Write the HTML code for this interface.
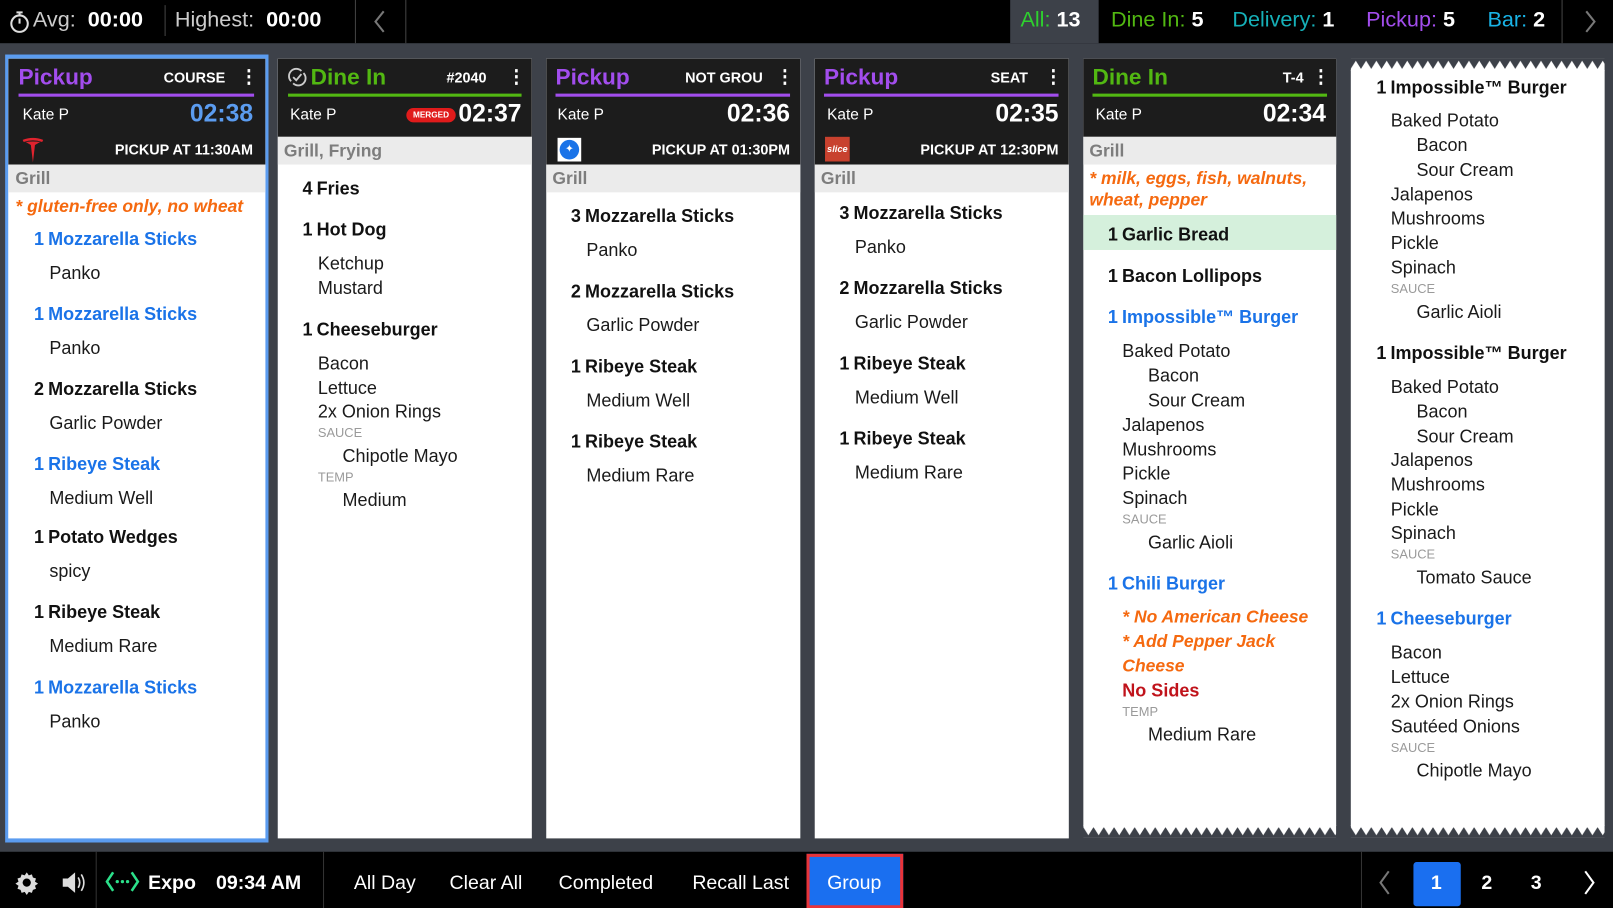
<!DOCTYPE html>
<html><head><meta charset="utf-8"><style>
*{margin:0;padding:0;box-sizing:border-box}
body{width:1613px;height:908px;overflow:hidden;background:#000;font-family:"Liberation Sans",sans-serif}
#w{position:absolute;left:0;top:0;width:1568px;height:883px;transform:scale(1.0287);transform-origin:0 0;background:#3d4149}
.a{position:absolute}
.l{position:absolute;white-space:nowrap;line-height:22px;transform:translateY(-50%)}
.top{left:0;top:0;width:1568px;height:42px;background:#000}
.bot{left:0;top:828px;width:1568px;height:55px;background:#000}
.card{position:absolute;top:57px;height:758px;background:#fff;overflow:hidden}
.hd{position:absolute;left:0;top:0;width:100%;background:#1c1c1c}
.ttl{font-size:22px;font-weight:bold}
.lab{font-size:14px;font-weight:bold;color:#fff}
.kb{font-size:18px;font-weight:bold;color:#fff}
.nm{font-size:15px;color:#fff}
.tm{font-size:24px;font-weight:bold;color:#fff}
.pk{font-size:14px;font-weight:bold;color:#fff}
.band{position:absolute;left:0;width:100%;height:27px;background:#ebebeb}
.g{font-size:17px;font-weight:bold;color:#7d7d7d}
.al{font-size:17px;font-weight:bold;font-style:italic;color:#f5690f}
.i{font-size:17.5px;font-weight:bold;color:#111}
.i span{margin-left:4px}
.b{color:#1a73e8}
.m{font-size:17.5px;color:#1a1a1a}
.s{font-size:12.5px;color:#9a9a9a}
.r{color:#c0131b;font-weight:bold}
.tb{font-size:21px;color:#fff}
.bb{font-size:19px;color:#fff}
.dv{position:absolute;width:1px;background:#333}
</style></head><body><div id="w">

<div class="a top">
 <svg class="a" style="left:8px;top:9px" width="22" height="24" viewBox="0 0 22 24"><circle cx="11" cy="14" r="8" fill="none" stroke="#ddd" stroke-width="2"/><path d="M8 3h6M11 3v3M11 14V9" stroke="#ddd" stroke-width="2" fill="none"/></svg>
 <div class="l tb" style="left:32px;top:20px;color:#ccc">Avg: <b style="color:#fff">&nbsp;00:00</b></div>
 <div class="dv" style="left:160px;top:5px;height:30px;background:#444"></div>
 <div class="l tb" style="left:170px;top:20px;color:#ccc">Highest: <b style="color:#fff">&nbsp;00:00</b></div>
 <div class="dv" style="left:345px;top:0;height:42px;background:#444"></div>
 <div class="dv" style="left:394px;top:0;height:42px;background:#444"></div>
 <svg class="a" style="left:360px;top:8px" width="18" height="26"><path d="M13 3L5 13l8 10" stroke="#777" stroke-width="2" fill="none"/></svg>
 <div class="a" style="left:982px;top:0;width:86px;height:42px;background:#3d4149"></div>
 <div class="l tb" style="left:992px;top:20px;color:#2ed12e">All: <b style="color:#fff">13</b></div>
 <div class="l tb" style="left:1080px;top:20px;color:#52b812">Dine In: <b style="color:#fff">5</b></div>
 <div class="l tb" style="left:1198px;top:20px;color:#16b0b8">Delivery: <b style="color:#fff">1</b></div>
 <div class="l tb" style="left:1328px;top:20px;color:#a24ded">Pickup: <b style="color:#fff">5</b></div>
 <div class="l tb" style="left:1446px;top:20px;color:#19b3e6">Bar: <b style="color:#fff">2</b></div>
 <div class="dv" style="left:1518px;top:0;height:42px;background:#444"></div>
 <svg class="a" style="left:1537px;top:8px" width="18" height="26"><path d="M5 3l8 10-8 10" stroke="#777" stroke-width="2" fill="none"/></svg>
</div>

<!-- Card 1 -->
<div class="a" style="left:5px;top:53px;width:256px;height:766px;background:#5b9cf0"></div>
<div class="card" style="left:8px;width:250px">
 <div class="hd" style="height:103px"></div>
 <div class="l ttl" style="left:10px;top:18px;color:#a24ded">Pickup</div>
 <div class="l lab" style="left:151px;top:18px">COURSE</div>
 <div class="l kb" style="left:225px;top:17px">&#8942;</div>
 <div class="a" style="left:10px;top:34px;width:229px;height:3px;background:#a24ded"></div>
 <div class="l nm" style="left:14px;top:55px">Kate P</div>
 <div class="l tm" style="right:12px;top:54px;color:#5b9cf0">02:38</div>
 <svg class="a" style="left:12px;top:76px" width="24" height="26" viewBox="0 0 24 26"><path d="M2 3Q12 -1 22 3L21 5Q12 2 3 5Z M5 5Q12 4 19 5L14 8 12 25 10 8Z" fill="#e0232e"/></svg>
 <div class="l pk" style="right:12px;top:88px">PICKUP AT 11:30AM</div>
 <div class="band" style="top:103px"></div>
 <div class="l g" style="left:7px;top:117px">Grill</div>
 <div class="l al" style="left:7px;top:144px">* gluten-free only, no wheat</div>
 <div class="l i b" style="left:25px;top:175px">1<span>Mozzarella Sticks</span></div>
 <div class="l m" style="left:40px;top:208px">Panko</div>
 <div class="l i b" style="left:25px;top:248px">1<span>Mozzarella Sticks</span></div>
 <div class="l m" style="left:40px;top:281px">Panko</div>
 <div class="l i" style="left:25px;top:321px">2<span>Mozzarella Sticks</span></div>
 <div class="l m" style="left:40px;top:354px">Garlic Powder</div>
 <div class="l i b" style="left:25px;top:394px">1<span>Ribeye Steak</span></div>
 <div class="l m" style="left:40px;top:427px">Medium Well</div>
 <div class="l i" style="left:25px;top:465px">1<span>Potato Wedges</span></div>
 <div class="l m" style="left:40px;top:498px">spicy</div>
 <div class="l i" style="left:25px;top:538px">1<span>Ribeye Steak</span></div>
 <div class="l m" style="left:40px;top:571px">Medium Rare</div>
 <div class="l i b" style="left:25px;top:611px">1<span>Mozzarella Sticks</span></div>
 <div class="l m" style="left:40px;top:644px">Panko</div>
</div>

<!-- Card 2 -->
<div class="card" style="left:270px;width:247px">
 <div class="hd" style="height:76px"></div>
 <svg class="a" style="left:9px;top:8px" width="20" height="20" viewBox="0 0 20 20"><path d="M4 14A7 7 0 0 1 14 4M16 6A7 7 0 0 1 6 16" stroke="#ccc" stroke-width="1.8" fill="none"/><path d="M6 10l3 3 5-6" stroke="#ccc" stroke-width="1.8" fill="none"/></svg>
 <div class="l ttl" style="left:32px;top:18px;color:#52b812">Dine In</div>
 <div class="l lab" style="left:164px;top:18px">#2040</div>
 <div class="l kb" style="left:223px;top:17px">&#8942;</div>
 <div class="a" style="left:10px;top:34px;width:227px;height:3px;background:#52b812"></div>
 <div class="l nm" style="left:12px;top:55px">Kate P</div>
 <div class="a" style="left:125px;top:48px;width:48px;height:14px;border-radius:7px;background:#e01b1b;color:#fff;font-size:8px;font-weight:bold;text-align:center;line-height:14px">MERGED</div>
 <div class="l tm" style="right:10px;top:54px">02:37</div>
 <div class="band" style="top:76px"></div>
 <div class="l g" style="left:6px;top:90px">Grill, Frying</div>
 <div class="l i" style="left:24px;top:126px">4<span>Fries</span></div>
 <div class="l i" style="left:24px;top:166px">1<span>Hot Dog</span></div>
 <div class="l m" style="left:39px;top:199px">Ketchup</div>
 <div class="l m" style="left:39px;top:223px">Mustard</div>
 <div class="l i" style="left:24px;top:263px">1<span>Cheeseburger</span></div>
 <div class="l m" style="left:39px;top:296px">Bacon</div>
 <div class="l m" style="left:39px;top:320px">Lettuce</div>
 <div class="l m" style="left:39px;top:343px">2x Onion Rings</div>
 <div class="l s" style="left:39px;top:364px">SAUCE</div>
 <div class="l m" style="left:63px;top:386px">Chipotle Mayo</div>
 <div class="l s" style="left:39px;top:407px">TEMP</div>
 <div class="l m" style="left:63px;top:429px">Medium</div>
</div>

<!-- Card 3 -->
<div class="card" style="left:531px;width:247px">
 <div class="hd" style="height:103px"></div>
 <div class="l ttl" style="left:9px;top:18px;color:#a24ded">Pickup</div>
 <div class="l lab" style="left:135px;top:18px">NOT GROU</div>
 <div class="l kb" style="left:223px;top:17px">&#8942;</div>
 <div class="a" style="left:9px;top:34px;width:228px;height:3px;background:#a24ded"></div>
 <div class="l nm" style="left:11px;top:55px">Kate P</div>
 <div class="l tm" style="right:10px;top:54px">02:36</div>
 <div class="a" style="left:11px;top:77px;width:23px;height:23px;background:#fff"></div>
 <div class="a" style="left:13px;top:79px;width:19px;height:19px;border-radius:50%;background:#1a73e8;color:#fff;font-size:10px;text-align:center;line-height:19px">&#10022;</div>
 <div class="l pk" style="right:10px;top:88px">PICKUP AT 01:30PM</div>
 <div class="band" style="top:103px"></div>
 <div class="l g" style="left:6px;top:117px">Grill</div>
 <div class="l i" style="left:24px;top:153px">3<span>Mozzarella Sticks</span></div>
 <div class="l m" style="left:39px;top:186px">Panko</div>
 <div class="l i" style="left:24px;top:226px">2<span>Mozzarella Sticks</span></div>
 <div class="l m" style="left:39px;top:259px">Garlic Powder</div>
 <div class="l i" style="left:24px;top:299px">1<span>Ribeye Steak</span></div>
 <div class="l m" style="left:39px;top:332px">Medium Well</div>
 <div class="l i" style="left:24px;top:372px">1<span>Ribeye Steak</span></div>
 <div class="l m" style="left:39px;top:405px">Medium Rare</div>
</div>

<!-- Card 4 -->
<div class="card" style="left:792px;width:247px">
 <div class="hd" style="height:103px"></div>
 <div class="l ttl" style="left:9px;top:18px;color:#a24ded">Pickup</div>
 <div class="l lab" style="left:171px;top:18px">SEAT</div>
 <div class="l kb" style="left:223px;top:17px">&#8942;</div>
 <div class="a" style="left:9px;top:34px;width:228px;height:3px;background:#a24ded"></div>
 <div class="l nm" style="left:12px;top:55px">Kate P</div>
 <div class="l tm" style="right:10px;top:54px">02:35</div>
 <div class="a" style="left:10px;top:76px;width:24px;height:24px;background:#c8412e;color:#fff;font-size:9px;font-weight:bold;font-style:italic;text-align:center;line-height:24px">slice</div>
 <div class="l pk" style="right:10px;top:88px">PICKUP AT 12:30PM</div>
 <div class="band" style="top:103px"></div>
 <div class="l g" style="left:6px;top:117px">Grill</div>
 <div class="l i" style="left:24px;top:150px">3<span>Mozzarella Sticks</span></div>
 <div class="l m" style="left:39px;top:183px">Panko</div>
 <div class="l i" style="left:24px;top:223px">2<span>Mozzarella Sticks</span></div>
 <div class="l m" style="left:39px;top:256px">Garlic Powder</div>
 <div class="l i" style="left:24px;top:296px">1<span>Ribeye Steak</span></div>
 <div class="l m" style="left:39px;top:329px">Medium Well</div>
 <div class="l i" style="left:24px;top:369px">1<span>Ribeye Steak</span></div>
 <div class="l m" style="left:39px;top:402px">Medium Rare</div>
</div>

<!-- Card 5 -->
<div class="card" style="left:1053px;width:246px;height:760px;background:transparent">
 <div class="a" style="left:0;top:0;width:246px;height:746px;background:#fff"></div>
 <svg class="a" style="left:0;top:745px" width="246" height="12"><pattern id="z" width="10" height="12" patternUnits="userSpaceOnUse"><path d="M0 0H10V2L5 10 0 2Z" fill="#fff"/></pattern><rect width="246" height="12" fill="url(#z)"/></svg>
 <div class="hd" style="height:76px"></div>
 <div class="l ttl" style="left:9px;top:18px;color:#52b812">Dine In</div>
 <div class="l lab" style="left:194px;top:18px">T-4</div>
 <div class="l kb" style="left:222px;top:17px">&#8942;</div>
 <div class="a" style="left:9px;top:34px;width:228px;height:3px;background:#52b812"></div>
 <div class="l nm" style="left:12px;top:55px">Kate P</div>
 <div class="l tm" style="right:10px;top:54px">02:34</div>
 <div class="band" style="top:76px"></div>
 <div class="l g" style="left:6px;top:90px">Grill</div>
 <div class="l al" style="left:6px;top:117px">* milk, eggs, fish, walnuts,</div>
 <div class="l al" style="left:6px;top:138px">wheat, pepper</div>
 <div class="a" style="left:0;top:152px;width:246px;height:34px;background:#d5f0dc"></div>
 <div class="l i" style="left:24px;top:171px">1<span>Garlic Bread</span></div>
 <div class="l i" style="left:24px;top:211px">1<span>Bacon Lollipops</span></div>
 <div class="l i b" style="left:24px;top:251px">1<span>Impossible™ Burger</span></div>
 <div class="l m" style="left:38px;top:284px">Baked Potato</div>
 <div class="l m" style="left:63px;top:308px">Bacon</div>
 <div class="l m" style="left:63px;top:332px">Sour Cream</div>
 <div class="l m" style="left:38px;top:356px">Jalapenos</div>
 <div class="l m" style="left:38px;top:380px">Mushrooms</div>
 <div class="l m" style="left:38px;top:403px">Pickle</div>
 <div class="l m" style="left:38px;top:427px">Spinach</div>
 <div class="l s" style="left:38px;top:448px">SAUCE</div>
 <div class="l m" style="left:63px;top:470px">Garlic Aioli</div>
 <div class="l i b" style="left:24px;top:510px">1<span>Chili Burger</span></div>
 <div class="l al" style="left:38px;top:543px">* No American Cheese</div>
 <div class="l al" style="left:38px;top:567px">* Add Pepper Jack</div>
 <div class="l al" style="left:38px;top:591px">Cheese</div>
 <div class="l m r" style="left:38px;top:614px">No Sides</div>
 <div class="l s" style="left:38px;top:635px">TEMP</div>
 <div class="l m" style="left:63px;top:657px">Medium Rare</div>
</div>

<!-- Card 6 -->
<div class="card" style="left:1313px;width:247px;height:760px;background:transparent">
 <svg class="a" style="left:0;top:0" width="247" height="12"><pattern id="z2" width="10" height="12" patternUnits="userSpaceOnUse"><path d="M0 12H10V10L5 2 0 10Z" fill="#fff"/></pattern><rect width="247" height="12" fill="url(#z2)"/></svg>
 <div class="a" style="left:0;top:11px;width:247px;height:735px;background:#fff"></div>
 <svg class="a" style="left:0;top:745px" width="247" height="12"><rect width="247" height="12" fill="url(#z)"/></svg>
 <div class="l i" style="left:25px;top:28px">1<span>Impossible™ Burger</span></div>
 <div class="l m" style="left:39px;top:60px">Baked Potato</div>
 <div class="l m" style="left:64px;top:84px">Bacon</div>
 <div class="l m" style="left:64px;top:108px">Sour Cream</div>
 <div class="l m" style="left:39px;top:132px">Jalapenos</div>
 <div class="l m" style="left:39px;top:155px">Mushrooms</div>
 <div class="l m" style="left:39px;top:179px">Pickle</div>
 <div class="l m" style="left:39px;top:203px">Spinach</div>
 <div class="l s" style="left:39px;top:224px">SAUCE</div>
 <div class="l m" style="left:64px;top:246px">Garlic Aioli</div>
 <div class="l i" style="left:25px;top:286px">1<span>Impossible™ Burger</span></div>
 <div class="l m" style="left:39px;top:319px">Baked Potato</div>
 <div class="l m" style="left:64px;top:343px">Bacon</div>
 <div class="l m" style="left:64px;top:367px">Sour Cream</div>
 <div class="l m" style="left:39px;top:390px">Jalapenos</div>
 <div class="l m" style="left:39px;top:414px">Mushrooms</div>
 <div class="l m" style="left:39px;top:438px">Pickle</div>
 <div class="l m" style="left:39px;top:461px">Spinach</div>
 <div class="l s" style="left:39px;top:482px">SAUCE</div>
 <div class="l m" style="left:64px;top:504px">Tomato Sauce</div>
 <div class="l i b" style="left:25px;top:544px">1<span>Cheeseburger</span></div>
 <div class="l m" style="left:39px;top:577px">Bacon</div>
 <div class="l m" style="left:39px;top:601px">Lettuce</div>
 <div class="l m" style="left:39px;top:625px">2x Onion Rings</div>
 <div class="l m" style="left:39px;top:649px">Sautéed Onions</div>
 <div class="l s" style="left:39px;top:670px">SAUCE</div>
 <div class="l m" style="left:64px;top:692px">Chipotle Mayo</div>
</div>

<!-- Bottom bar -->
<div class="a bot">
 <svg class="a" style="left:14px;top:18px" width="24" height="24" viewBox="0 0 24 24"><path d="M12 2l2 3 3-1 1 3 3 1-1 3 3 2-3 2 1 3-3 1-1 3-3-1-2 3-2-3-3 1-1-3-3-1 1-3-3-2 3-2-1-3 3-1 1-3 3 1z" fill="#ddd"/><circle cx="12" cy="12" r="4" fill="#000"/></svg>
 <svg class="a" style="left:58px;top:18px" width="28" height="24" viewBox="0 0 28 24"><path d="M3 8h5l7-6v20l-7-6H3z" fill="#ddd"/><path d="M18 7q3 5 0 10M21 4q5 8 0 16" stroke="#ddd" stroke-width="1.6" fill="none"/></svg>
 <div class="dv" style="left:93px;top:0;height:55px"></div>
 <svg class="a" style="left:102px;top:18px" width="34" height="22" viewBox="0 0 34 22"><path d="M8 2L2 11l6 9M26 2l6 9-6 9" stroke="#2be08a" stroke-width="2.5" fill="none"/><circle cx="12" cy="11" r="1.6" fill="#2be08a"/><circle cx="17" cy="11" r="1.6" fill="#2be08a"/><circle cx="22" cy="11" r="1.6" fill="#2be08a"/></svg>
 <div class="l bb" style="left:144px;top:31px;font-weight:bold">Expo</div>
 <div class="l bb" style="left:210px;top:31px;font-weight:bold">09:34 AM</div>
 <div class="dv" style="left:314px;top:0;height:55px"></div>
 <div class="l bb" style="left:344px;top:31px">All Day</div>
 <div class="l bb" style="left:437px;top:31px">Clear All</div>
 <div class="l bb" style="left:543px;top:31px">Completed</div>
 <div class="l bb" style="left:673px;top:31px">Recall Last</div>
 <div class="a" style="left:784px;top:2px;width:94px;height:53px;background:#1a6ff0;border:3px solid #e8343a"></div>
 <div class="l bb" style="left:804px;top:31px">Group</div>
 <div class="dv" style="left:1323px;top:0;height:55px"></div>
 <svg class="a" style="left:1337px;top:16px" width="18" height="28"><path d="M13 3L5 14l8 11" stroke="#777" stroke-width="2" fill="none"/></svg>
 <div class="a" style="left:1374px;top:10px;width:46px;height:43px;background:#1a6ff0;border-radius:3px"></div>
 <div class="l bb" style="left:1391px;top:31px;font-weight:bold">1</div>
 <div class="l bb" style="left:1440px;top:31px;font-weight:bold">2</div>
 <div class="l bb" style="left:1488px;top:31px;font-weight:bold">3</div>
 <svg class="a" style="left:1536px;top:16px" width="18" height="28"><path d="M5 3l8 11-8 11" stroke="#fff" stroke-width="2" fill="none"/></svg>
</div>
</div></body></html>
